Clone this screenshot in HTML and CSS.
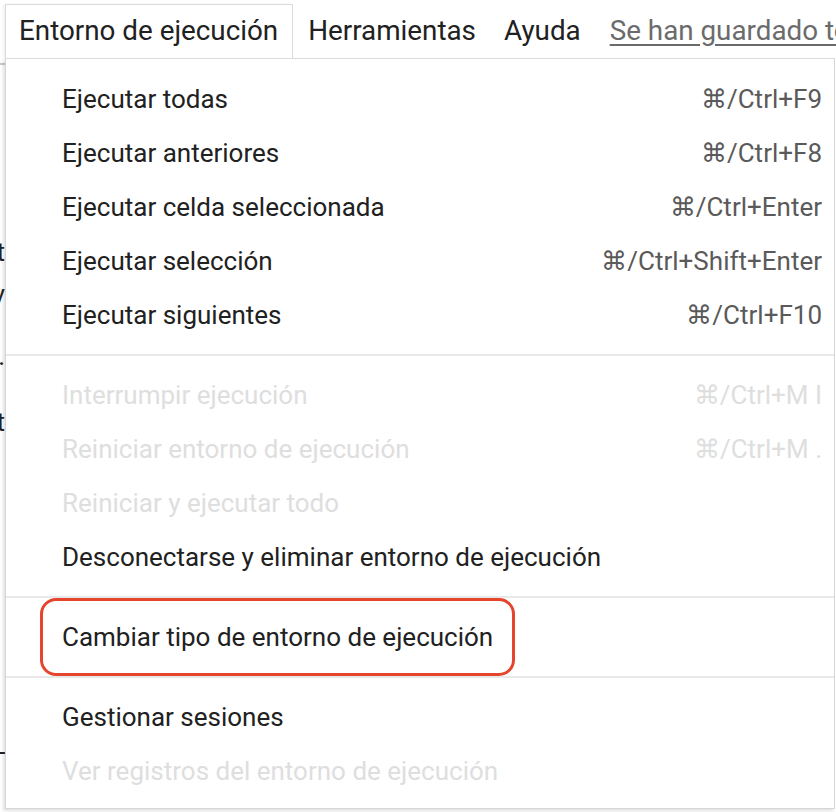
FILE: index.html
```html
<!DOCTYPE html>
<html lang="es">
<head>
<meta charset="utf-8">
<title>Entorno de ejecución</title>
<link rel="stylesheet" href="styles.css">
</head>
<body>
<div class="page">
  <div class="menubar">
    <div class="tab active">Entorno de ejecución</div>
    <div class="tab">Herramientas</div>
    <div class="tab">Ayuda</div>
    <div class="saved">Se han guardado todos los cambios</div>
  </div>
  <div class="behind">
    <div class="toolbar-line"></div>
    <div class="frag f1">t</div>
    <div class="frag f2">v</div>
    <div class="frag f3">.</div>
    <div class="frag f4">t</div>
    <div class="frag f5">_</div>
  </div>
  <div class="menu">
    <div class="group">
      <div class="item"><span>Ejecutar todas</span><span class="key">⌘/Ctrl+F9</span></div>
      <div class="item"><span>Ejecutar anteriores</span><span class="key">⌘/Ctrl+F8</span></div>
      <div class="item"><span>Ejecutar celda seleccionada</span><span class="key">⌘/Ctrl+Enter</span></div>
      <div class="item"><span>Ejecutar selección</span><span class="key">⌘/Ctrl+Shift+Enter</span></div>
      <div class="item"><span>Ejecutar siguientes</span><span class="key">⌘/Ctrl+F10</span></div>
    </div>
    <div class="sep"></div>
    <div class="group">
      <div class="item disabled"><span>Interrumpir ejecución</span><span class="key">⌘/Ctrl+M I</span></div>
      <div class="item disabled"><span>Reiniciar entorno de ejecución</span><span class="key">⌘/Ctrl+M .</span></div>
      <div class="item disabled"><span>Reiniciar y ejecutar todo</span></div>
      <div class="item"><span>Desconectarse y eliminar entorno de ejecución</span></div>
    </div>
    <div class="sep"></div>
    <div class="group">
      <div class="item highlight"><span>Cambiar tipo de entorno de ejecución</span></div>
    </div>
    <div class="sep"></div>
    <div class="group">
      <div class="item"><span>Gestionar sesiones</span></div>
      <div class="item disabled"><span>Ver registros del entorno de ejecución</span></div>
    </div>
  </div>
</div>
</body>
</html>
```

FILE: styles.css
```css
html, body {
  margin: 0;
  padding: 0;
  background: #ffffff;
}
body {
  font-family: Roboto, "Liberation Sans", Arial, sans-serif;
  color: #212121;
  overflow: hidden;
}
.page {
  position: relative;
  width: 836px;
  height: 812px;
  overflow: hidden;
}
.menubar {
  display: flex;
  align-items: stretch;
  height: 54px;
  margin-top: 4px;
  padding-left: 5px;
  font-size: 27.8px;
  white-space: nowrap;
}
.tab {
  display: flex;
  align-items: center;
  padding: 0 14px 2px 14px;
  color: #212121;
}
.tab.active {
  padding: 0 14px 2px 13px;
  margin-right: 1px;
  border: 1px solid #dadada;
  border-bottom: none;
  box-shadow: -2px 0 3px rgba(0,0,0,0.06);
}
.saved {
  display: flex;
  align-items: center;
  padding: 0 0 2px 15px;
  color: #6b6b6b;
  text-decoration: underline;
  text-underline-offset: 4px;
}
.behind {
  position: absolute;
  left: 0;
  top: 58px;
  width: 6px;
  height: 754px;
  overflow: hidden;
  font-size: 26px;
  color: #222;
}
.toolbar-line {
  position: absolute;
  left: 0;
  top: 5px;
  width: 6px;
  height: 2px;
  background: #c8c8c8;
}
.frag {
  position: absolute;
  right: 1px;
  line-height: 1;
}
.f1 { top: 181px; }
.f2 { top: 223px; }
.f3 { top: 285px; }
.f4 { top: 351px; }
.f5 { top: 672px; }
.menu {
  position: absolute;
  left: 5px;
  top: 58px;
  width: 828px;
  padding: 13px 0 10px;
  background: #ffffff;
  border: 1px solid #d6d6d6;
  border-top-color: #dcdcdc;
  box-shadow: -2px 2px 3px rgba(0,0,0,0.12);
}
.item {
  position: relative;
  display: flex;
  justify-content: space-between;
  align-items: center;
  height: 54px;
  padding: 0 12px 0 56px;
  font-size: 26px;
  color: #212121;
  white-space: nowrap;
}
.key {
  color: #5a5a5a;
}
.item.disabled,
.item.disabled .key {
  color: #dedede;
}
.sep {
  height: 2px;
  margin: 12px 0;
  background: #e8e8e8;
}
.highlight::after {
  content: "";
  position: absolute;
  left: 34px;
  top: -12px;
  width: 469px;
  height: 72px;
  border: 3px solid #e5452c;
  border-radius: 16px;
}
```
